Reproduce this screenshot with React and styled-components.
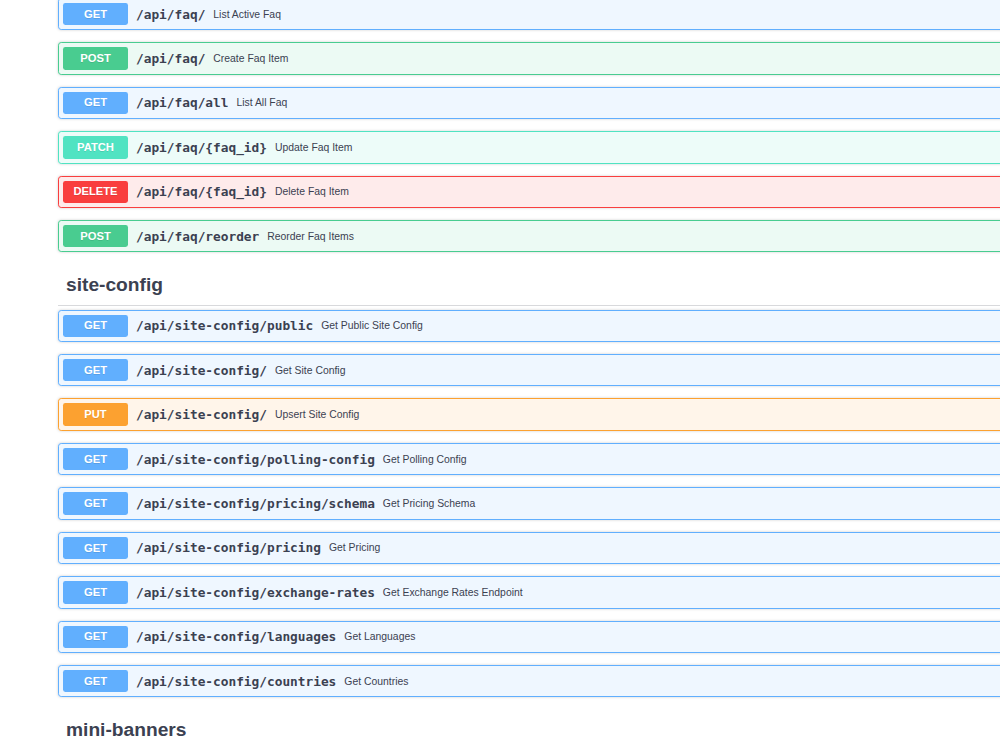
import React from 'react';
import styled, { createGlobalStyle } from 'styled-components';

const METHODS = {
  GET: '97, 175, 254',
  POST: '73, 204, 144',
  PUT: '252, 161, 48',
  DELETE: '249, 62, 62',
  PATCH: '80, 227, 194',
};

const faqOps = [
  { method: 'GET', path: '/api/faq/', desc: 'List Active Faq' },
  { method: 'POST', path: '/api/faq/', desc: 'Create Faq Item' },
  { method: 'GET', path: '/api/faq/all', desc: 'List All Faq' },
  { method: 'PATCH', path: '/api/faq/{faq_id}', desc: 'Update Faq Item' },
  { method: 'DELETE', path: '/api/faq/{faq_id}', desc: 'Delete Faq Item' },
  { method: 'POST', path: '/api/faq/reorder', desc: 'Reorder Faq Items' },
];

const siteConfigOps = [
  { method: 'GET', path: '/api/site-config/public', desc: 'Get Public Site Config' },
  { method: 'GET', path: '/api/site-config/', desc: 'Get Site Config' },
  { method: 'PUT', path: '/api/site-config/', desc: 'Upsert Site Config' },
  { method: 'GET', path: '/api/site-config/polling-config', desc: 'Get Polling Config' },
  { method: 'GET', path: '/api/site-config/pricing/schema', desc: 'Get Pricing Schema' },
  { method: 'GET', path: '/api/site-config/pricing', desc: 'Get Pricing' },
  { method: 'GET', path: '/api/site-config/exchange-rates', desc: 'Get Exchange Rates Endpoint' },
  { method: 'GET', path: '/api/site-config/languages', desc: 'Get Languages' },
  { method: 'GET', path: '/api/site-config/countries', desc: 'Get Countries' },
];

const GlobalStyle = createGlobalStyle`
  html, body {
    margin: 0;
    padding: 0;
    background: #fff;
    overflow: hidden;
  }
  body {
    font-family: "Liberation Sans", Arial, sans-serif;
    color: #3b4151;
  }
`;

// page is scrolled a little, and wider than the window
const Wrapper = styled.div`
  width: 1200px;
  margin-top: -2.2px;
  padding-left: 58px;
  box-sizing: border-box;
`;

const TagSection = styled.section`
  display: flex;
  flex-direction: column;
`;

const TagHeading = styled.h3`
  display: flex;
  align-items: center;
  margin: 0 0 4px;
  padding: 9px 16px 7px 8px;
  font-size: 19.2px;
  line-height: 24.1px;
  font-weight: 700;
  color: #3b4151;
  border-bottom: 1px solid rgba(59, 65, 81, 0.2);
`;

const OpBlock = styled.div`
  display: flex;
  align-items: center;
  padding: 4px;
  margin-bottom: 12px;
  border: 1px solid rgb(${({ rgb }) => rgb});
  background: rgba(${({ rgb }) => rgb}, 0.1);
  border-radius: 3.2px;
  box-shadow: 0 0 3px rgba(0, 0, 0, 0.19);
`;

const MethodBadge = styled.span`
  min-width: 65px;
  padding: 4.8px 0;
  line-height: 12.84px;
  font-size: 11.2px;
  font-weight: 700;
  text-align: center;
  color: #fff;
  background: rgb(${({ rgb }) => rgb});
  border-radius: 2.4px;
  text-shadow: 0 1px 0 rgba(0, 0, 0, 0.1);
`;

const Path = styled.span`
  padding: 0 8px;
  font-family: "DejaVu Sans Mono", monospace;
  font-size: 12.8px;
  font-weight: 700;
  color: #3b4151;
`;

const Description = styled.span`
  font-size: 10.4px;
  color: #3b4151;
`;

const Operation = ({ method, path, desc }) => (
  <OpBlock rgb={METHODS[method]}>
    <MethodBadge rgb={METHODS[method]}>{method}</MethodBadge>
    <Path>{path}</Path>
    <Description>{desc}</Description>
  </OpBlock>
);

const App = () => (
  <>
    <GlobalStyle />
    <Wrapper>
      <TagSection>
        {faqOps.map((op, i) => (
          <Operation key={i} {...op} />
        ))}
      </TagSection>
      <TagSection>
        <TagHeading>site-config</TagHeading>
        {siteConfigOps.map((op, i) => (
          <Operation key={i} {...op} />
        ))}
      </TagSection>
      <TagSection>
        <TagHeading>mini-banners</TagHeading>
      </TagSection>
    </Wrapper>
  </>
);

export default App;
